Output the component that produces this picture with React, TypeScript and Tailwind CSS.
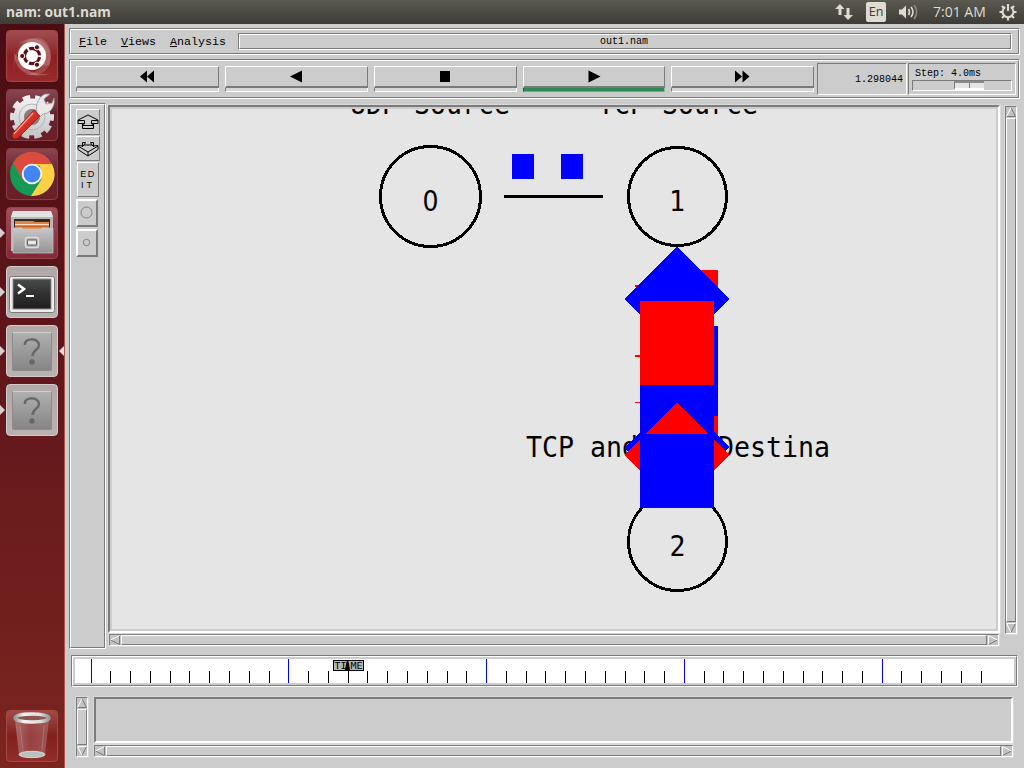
import React from "react";

const MONO = "font-['Liberation_Mono',monospace]";
const DARK = "#7b7b7b";

function Groove({ className = "", inner = "", children }: { className?: string; inner?: string; children?: React.ReactNode }) {
  return (
    <div className={`border border-t-[#7b7b7b] border-l-[#7b7b7b] border-r-white border-b-white ${className}`}>
      <div className={`h-full w-full border border-t-white border-l-white border-r-[#7b7b7b] border-b-[#7b7b7b] ${inner}`}>{children}</div>
    </div>
  );
}

function Tri({ dir }: { dir: "up" | "down" | "left" | "right" }) {
  const paths = {
    up: ["M5 0.5L0.5 9.5", "M5 0.5L9.5 9.5H0.5"],
    down: ["M0.5 0.5H9.5M0.5 0.5L5 9.5", "M9.5 0.5L5 9.5"],
    left: ["M9.5 0.5L0.5 5", "M0.5 5L9.5 9.5V0.5"],
    right: ["M0.5 9.5V0.5L9.5 5", "M9.5 5L0.5 9.5"],
  }[dir];
  return (
    <svg className="h-[10px] w-[10px] shrink-0 bg-[#c3c3c3]" viewBox="0 0 10 10" fill="none">
      <path d={paths[1]} stroke={DARK} />
      <path d={paths[0]} stroke="#fff" />
    </svg>
  );
}

function Scroll({ vertical, className = "" }: { vertical?: boolean; className?: string }) {
  return (
    <div className={`flex gap-px border border-t-[#7b7b7b] border-l-[#7b7b7b] border-r-white border-b-white bg-[#c3c3c3] outline outline-[#d9d9d9] ${vertical ? "flex-col" : ""} ${className}`}>
      <Tri dir={vertical ? "up" : "left"} />
      <div className="min-h-0 min-w-0 flex-1 border border-t-white border-l-white border-r-[#7b7b7b] border-b-[#7b7b7b] bg-[#cccccc]" />
      <Tri dir={vertical ? "down" : "right"} />
    </div>
  );
}

function Control({ children, active, className }: { children: React.ReactNode; active?: boolean; className: string }) {
  return (
    <div className={`flex h-[26px] flex-col ${className}`}>
      <div className="flex h-[22px] items-center justify-center border-t border-r border-b-2 border-l border-t-white border-r-[#7b7b7b] border-b-[#7b7b7b] border-l-white">
        <svg className="mr-px" width="16" height="13" viewBox="0 0 16 13">{children}</svg>
      </div>
      <div className={active ? "h-1 border-r border-b border-l border-r-[#7fc79c] border-b-[#5fb383] border-l-[#1b5a36] bg-[#2e8b57]" : "h-1 border-r border-b border-l border-r-white border-b-white border-l-[#7b7b7b] bg-[#d6d6d6]"} />
    </div>
  );
}

function Tile({ children, className, left, right }: { children: React.ReactNode; className: string; left?: boolean; right?: boolean }) {
  return (
    <div className="relative flex h-[52px] w-full justify-center">
      {left && <svg className="absolute top-[21px] left-0" width="5" height="10"><path d="M0 0L5 5L0 10Z" fill="#d8d0d0" /></svg>}
      <div className={`flex h-[52px] w-[52px] items-center justify-center overflow-hidden rounded-[4px] ${className}`}>{children}</div>
      {right && <svg className="absolute top-[21px] right-0" width="5" height="10"><path d="M5 0L0 5L5 10Z" fill="#e4dcdc" /></svg>}
    </div>
  );
}

function Ubuntu() {
  return (
    <svg className="shrink-0" width="52" height="52" viewBox="0 0 52 52">
      <path d="M8 42C6 25 16 6 33 8C43 10 48 24 43 35L37 36C42 24 36 12 24 13C14 14 8 26 8 42Z" fill="#fff" opacity=".16" />
      <path d="M12 14C25 3 45 10 45 28C44 42 32 48 18 44C32 44 40 36 40 26C38 12 25 10 12 14Z" fill="#fff" opacity=".16" />
      <path d="M8 23C8 42 26 50 46 43C32 46 16 42 12 27Z" fill="#fff" opacity=".22" />
      <circle cx="26" cy="26" r="14" fill="#fff" />
      <circle cx="26" cy="26" r="7.6" fill="none" stroke="#5b1118" strokeWidth="3.2" strokeDasharray="13.9 2" strokeDashoffset="-1" transform="rotate(0 26 26)" />
      <g fill="#5b1118" stroke="#fff" strokeWidth="1"><circle cx="16.2" cy="26" r="2.6" /><circle cx="31" cy="17.3" r="2.6" /><circle cx="31" cy="34.7" r="2.6" /></g>
    </svg>
  );
}

function Settings() {
  return (
    <svg className="shrink-0" width="52" height="52" viewBox="0 0 52 52">
      <defs>
        <linearGradient id="gear" gradientUnits="userSpaceOnUse" x1="0" y1="5" x2="0" y2="50"><stop stopColor="#f6f6f6" /><stop offset="1" stopColor="#c2c2c2" /></linearGradient>
        <linearGradient id="handle" x1="0" y1="0" x2="1" y2="1"><stop stopColor="#f0624f" /><stop offset=".6" stopColor="#cf2820" /><stop offset="1" stopColor="#8f1512" /></linearGradient>
      </defs>
      <circle cx="26" cy="28" r="13" fill="none" stroke="url(#gear)" strokeWidth="11" />
      <circle cx="26" cy="28" r="19.5" fill="none" stroke="url(#gear)" strokeWidth="5" strokeDasharray="7.3 4.95" strokeDashoffset="3.6" />
      <circle cx="26" cy="28" r="13" fill="none" stroke="#b5b5b5" strokeWidth="1" />
      <circle cx="26" cy="28" r="8" fill="#8d7b7e" />
      <path d="M31 23C29 17 32 8 39 5L44 5L38 10L40 15L46 14L48 9C50 18 43 25 37 25L33 29Z" fill="#e8e8e8" stroke="#969696" strokeWidth=".8" />
      <path d="M28 21L34 27L12 49C9 52 4 47 7 44Z" fill="url(#handle)" stroke="#8e1b16" strokeWidth=".8" />
      <path d="M27 24L8 45" stroke="#ff9786" strokeWidth="1.3" />
    </svg>
  );
}

function Chrome() {
  return (
    <svg width="46" height="46" viewBox="-23 -23 46 46">
      <circle r="22" fill="#149a54" />
      <path d="M-19.05 -11A22 22 0 0 1 19.9 -10H0L-9.5 5.5Z" fill="#dc4b3e" />
      <path d="M20 -10A22 22 0 0 1 -1 22L9.5 5.5L8 -8L0 -10Z" fill="#ffd044" />
      <circle r="10.3" fill="#f4f5f7" /><circle r="8.4" fill="#4285f4" />
    </svg>
  );
}

function Files() {
  return (
    <svg className="shrink-0" width="52" height="52" viewBox="0 0 52 52">
      <defs><linearGradient id="cab" x2="0" y2="1"><stop stopColor="#c8c8c8" /><stop offset="1" stopColor="#939393" /></linearGradient></defs>
      <path d="M7 4H45L47 10V44H5V10Z" fill="#b7b7b7" />
      <path d="M7 4H45L47 10H5Z" fill="#e3e3e3" />
      <rect x="8" y="12" width="36" height="12" fill="#2f2a28" />
      <path d="M9 14H27L29 15H43V24H9Z" fill="#e5833d" />
      <path d="M9 17.5H43" stroke="#ffe3c4" /><path d="M9 19.5H43" stroke="#d35f27" />
      <path d="M7 21H16L17 22H35L36 21H47V46H7Z" fill="url(#cab)" stroke="#c9c9c9" strokeWidth=".7" />
      <rect x="19.5" y="30.5" width="13" height="10" rx="2" fill="#aaa" stroke="#ddd" strokeWidth="1.5" />
      <rect x="21.5" y="33" width="9" height="5" rx="1" fill="#e8e8e8" stroke="#5d5d5d" />
    </svg>
  );
}

function Terminal() {
  return (
    <svg className="shrink-0" width="52" height="52" viewBox="0 0 52 52">
      <defs><linearGradient id="term" x2="0" y2="1"><stop stopColor="#4b4b4b" /><stop offset=".5" stopColor="#303030" /><stop offset="1" stopColor="#1f1f1f" /></linearGradient></defs>
      <rect x="3.5" y="10.5" width="45" height="36" rx="2" fill="#eee" stroke="#777" />
      <rect x="7" y="13" width="38" height="30" fill="url(#term)" stroke="#8b8b8b" />
      <path d="M12 18.5L18 23L12 27.5" fill="none" stroke="#fff" strokeWidth="2.6" /><path d="M20 30H28" stroke="#fff" strokeWidth="2" />
    </svg>
  );
}

function Unknown() {
  return (
    <div className="flex h-[39px] w-[40px] items-center justify-center rounded-[2px] border border-[#8b8b8b] border-t-[#cfcfcf] bg-linear-to-b from-[#b0b0b0] to-[#858585]">
      <svg width="20" height="30" viewBox="0 0 20 30">
        <path d="M3 9C1.5 2 17 1 17 9C17 14 10.5 14 10.5 20" fill="none" stroke="#666" strokeWidth="2.4" />
        <circle cx="10" cy="26" r="2.7" fill="#666" />
      </svg>
    </div>
  );
}

function Trash() {
  return (
    <svg className="shrink-0" width="52" height="52" viewBox="0 0 52 52">
      <defs>
        <linearGradient id="bin"><stop stopColor="#b88c8c" /><stop offset=".45" stopColor="#a35151" /><stop offset="1" stopColor="#a86f6f" /></linearGradient>
        <linearGradient id="rim"><stop stopColor="#999" /><stop offset=".25" stopColor="#f3f3f3" /><stop offset=".75" stopColor="#ddd" /><stop offset="1" stopColor="#999" /></linearGradient>
      </defs>
      <path d="M9 10L13 44C16 48 36 48 39 44L43 10Z" fill="url(#bin)" opacity=".65" />
      <ellipse cx="26" cy="44.5" rx="13" ry="3.2" fill="#b9c1bf" stroke="#e5e5e5" strokeWidth=".8" />
      <ellipse cx="26" cy="8" rx="17" ry="4" fill="#8f5553" stroke="url(#rim)" strokeWidth="3.4" />
      <path d="M14 16L17 41M38 16L36 41" stroke="#d2a9a9" strokeOpacity=".35" />
    </svg>
  );
}

function TopBar() {
  return (
    <header className="flex h-6 shrink-0 items-center justify-between bg-linear-to-b from-[#5b5950] to-[#3d3c37] pr-[7px] pl-[6px] font-['Open_Sans','Noto_Sans',sans-serif] text-[#dfdbd2]">
      <span className="text-[13.8px] leading-6 font-bold">nam: out1.nam</span>
      <div className="flex items-center">
        <svg width="18" height="16" viewBox="0 0 18 16" fill="#dfdbd2"><path d="M5 0L9.5 5H6.5V11H3.5V5H0Z" /><path d="M13 16L8.5 11H11.5V4H14.5V11H18Z" /></svg>
        <span className="ml-[13px] flex h-5 w-5 items-center justify-center rounded-[2px] bg-[#dfdbd2] text-[12.5px] text-[#3d3c37]">En</span>
        <svg className="ml-[13px]" width="20" height="16" viewBox="0 0 20 16" fill="none"><path d="M0 5.5H3L7 1.5V14.5L3 10.5H0Z" fill="#dfdbd2" /><path d="M9.5 5Q11.5 8 9.5 11" stroke="#dfdbd2" strokeWidth="1.6" /><path d="M12 3Q16 8 12 13" stroke="#dfdbd2" strokeWidth="1.6" /><path d="M15 1Q20.5 8 15 15" stroke="#8c8980" strokeWidth="1.6" /></svg>
        <span className="ml-[14px] w-[54px] text-[14px] leading-6 whitespace-nowrap">7:01 AM</span>
        <svg className="ml-[12px]" width="18" height="18" viewBox="-9 -9 18 18" fill="none" stroke="#dfdbd2"><path d="M-2.7 -4.9A5.4 5.4 0 1 0 2.7 -4.9" strokeWidth="2" /><path d="M0 -8V-1" strokeWidth="2" /><path d="M5.5 0H8.5M-5.5 0H-8.5M0 5.5V8.5M4 4L6 6M-4 4L-6 6M4 -4L6 -6M-4 -4L-6 -6" strokeWidth="2.2" /></svg>
      </div>
    </header>
  );
}

function Launcher() {
  const wine = "border border-[#8d3a44] bg-linear-to-b from-[#8a4650] via-[#66212c] to-[#6c1f29]";
  const gray = "border border-[#d2cccc] bg-linear-to-b from-[#b3a8a8] to-[#b9b2b0]";
  return (
    <aside className="flex w-[65px] shrink-0 flex-col justify-between border-r border-[#a5594f] bg-linear-to-b from-[#4a0d13] via-[#65191c] via-55% to-[#7c251f] pt-[6px] pb-[6px]">
      <div className="flex flex-col gap-[7px]">
        <Tile className="border border-[#a5464a] bg-linear-to-b from-[#a04d50] via-[#8c2024] to-[#982a2b]"><Ubuntu /></Tile>
        <Tile className={wine}><Settings /></Tile>
        <Tile className={wine}><Chrome /></Tile>
        <Tile left className="border border-[#99404d] bg-linear-to-b from-[#a14e5d] to-[#822838]"><Files /></Tile>
        <Tile left className={gray}><Terminal /></Tile>
        <Tile left right className={gray}><Unknown /></Tile>
        <Tile left className={gray}><Unknown /></Tile>
      </div>
      <Tile className="border border-[#a14b48] bg-linear-to-b from-[#a04a48] via-[#82201e] to-[#922d2b]"><Trash /></Tile>
    </aside>
  );
}

function Menu({ label, className = "" }: { label: string; className?: string }) {
  return <span className={className}><span className="underline decoration-1 underline-offset-1">{label[0]}</span>{label.slice(1)}</span>;
}

function Toolbar() {
  return (
    <Groove className="mt-1 h-10 w-[951px]" inner="flex pt-[5px] pl-[5px]">
      <Control className="w-[143px]"><path d="M8 .5V12.5L1 6.5ZM15 .5V12.5L8 6.5Z" /></Control>
      <Control className="ml-[6px] w-[143px]"><path d="M14 .5V12.5L2 6.5Z" /></Control>
      <Control className="ml-[6px] w-[143px]"><path d="M3 1H13V12H3Z" /></Control>
      <Control active className="ml-[6px] w-[142px]"><path d="M2.5 .5V12.5L14.5 6.5Z" /></Control>
      <Control className="ml-[6px] w-[143px]"><path d="M1 .5V12.5L8 6.5ZM8.5 .5V12.5L15.5 6.5Z" /></Control>
      <div className={`${MONO} -mt-[3px] ml-[3px] flex h-8 w-[90px] items-center justify-end border border-t-[#7b7b7b] border-r-white border-b-white border-l-[#7b7b7b] pr-[3px] text-[10px]`}>1.298044</div>
      <div className={`${MONO} -mt-[3px] ml-px h-8 w-[108px] border border-t-[#7b7b7b] border-r-white border-b-white border-l-[#7b7b7b] pl-[3px] text-[10px] leading-none`}>
        <div className="h-4 pt-[5px] pl-[3px] whitespace-nowrap">Step: 4.0ms</div>
        <div className="flex h-[11px] w-[100px] border border-t-[#7b7b7b] border-r-white border-b-white border-l-[#7b7b7b] pl-[41px]">
          <div className="flex h-[9px] w-[30px] border-t-2 border-b-2 border-l border-t-[#8a8a8a] border-b-white border-l-[#7b7b7b] bg-[#e5e5e5]"><div className="ml-[14px] w-px bg-[#7b7b7b]" /></div>
        </div>
      </div>
    </Groove>
  );
}

const raised = "flex items-center justify-center border border-t-white border-l-white border-r-[#7b7b7b] border-b-[#7b7b7b]";
const raised2 = "flex items-center border-2 border-t-white border-l-white border-r-[#7b7b7b] border-b-[#7b7b7b]";

function ToolColumn() {
  return (
    <Groove className="h-[546px] w-[37px]" inner="flex flex-col items-start pt-1 pl-[5px]">
      <div className={`${raised} h-[26px] w-6`}>
        <svg className="shrink-0" width="22" height="16" viewBox="0 0 22 16" fill="none" stroke="#000"><path d="M5.5 14.5V9.5H1V6L11 1L21 6V9.5H16.5V14.5ZM1 6.5H7.5V9.5H5.5M21 6.5H14.5V9.5H16.5M7.5 9.5L6 11.5H16L14.5 9.5" /></svg>
      </div>
      <div className={`${raised} mt-px h-[25px] w-6`}>
        <svg className="shrink-0" width="22" height="16" viewBox="0 0 22 16" fill="none" stroke="#000"><path d="M5.5 1.5V5L1 4.5V8.5L11 15L21 8.5V4.5L16.5 5V1.5H13.5L15 4H7L8.5 1.5ZM1 5L11 11L21 5M11 11V15M7 4L5 6M15 4L17 6" /></svg>
      </div>
      <div className={`${raised} mt-px ml-px h-[35px] w-[22px] flex-col font-['Liberation_Sans',sans-serif] text-[9px] leading-[11px]`}>
        <span className="tracking-[1.6px]">ED</span><span className="tracking-[3px]">IT</span>
      </div>
      <div className={`${raised2} mt-[2px] h-7 w-[22px] pb-[2px] pl-[2px]`}><svg width="13" height="13"><circle cx="6.5" cy="6.5" r="5.5" fill="none" stroke="#777" strokeWidth=".9" /></svg></div>
      <div className={`${raised2} mt-[2px] h-7 w-[22px] pb-px pl-[4px]`}><svg width="9" height="9"><circle cx="4.5" cy="4.5" r="3.2" fill="none" stroke="#777" strokeWidth=".9" /></svg></div>
    </Groove>
  );
}

function Network() {
  const label = { fontSize: 29, lengthAdjust: "spacingAndGlyphs" as const };
  return (
    <svg className="block h-[520px] w-[884px] bg-[#e5e5e5] font-['DejaVu_Sans_Mono',monospace]" viewBox="112 109 884 520">
      <text x="350" y="114" textLength="160" {...label}>UDP Source</text>
      <text x="598" y="114" textLength="160" {...label}>TCP Source</text>
      <text x="526" y="457" textLength="304" {...label}>TCP and UDP Destina</text>
      <g fill="none" stroke="#000" strokeWidth="3" shapeRendering="crispEdges">
        <circle cx="430.5" cy="196.5" r="50" />
        <circle cx="677.5" cy="196.5" r="49" />
        <circle cx="677.5" cy="541.5" r="49" />
        <path d="M504 196.5H603" />
      </g>
      <text x="422.5" y="211" fontSize="29" textLength="16" lengthAdjust="spacingAndGlyphs" fontFamily="DejaVu Sans">0</text>
      <text x="669" y="211" textLength="16" {...label}>1</text>
      <text x="669.5" y="556" textLength="16" {...label}>2</text>
      <g shapeRendering="crispEdges">
        <path fill="#00f" d="M512 154H534V179H512ZM561 154H583V179H561Z" />
        <path fill="red" d="M700 270H718V291H700ZM635 285H645V287H635ZM635 355H640V357H635ZM635 402H640V403H635Z" />
        <path fill="#00f" d="M677 247L729.5 299L714 314H640L624.5 299Z" />
        <path fill="#00f" d="M714 326H718V416H714ZM640 385H714V508H640Z" />
        <path fill="red" d="M640 301H714V385H640ZM714 416H718V440H714Z" />
        <path fill="#00f" d="M640 432L624 448L628 451L640 441ZM714 431L729 447L726 451L714 441Z" />
        <path fill="red" d="M640 440L624.5 455L640 470ZM714 440L729.5 455L714 470ZM677 403L708.5 434H645.5Z" />
      </g>
    </svg>
  );
}

function Timeline() {
  const ticks = Array.from({ length: 46 }, (_, n) => ({ x: Math.floor(91.02 + 19.778 * n) - 75, major: n % 10 === 0 }));
  return (
    <Groove className="mt-[6px] ml-[2px] h-8 w-[947px]" inner="p-[2px]">
      <svg className="block h-6 w-[939px] bg-white" viewBox="0 0 939 24">
        <g shapeRendering="crispEdges">
          {ticks.map((t) => <rect key={t.x} x={t.x} y={t.major ? 0 : 12} width="1" height={t.major ? 24 : 12} fill={t.major ? "#0000ff" : "#000"} />)}
          <rect x="258.5" y="1.5" width="30" height="10" fill="#b5b5b5" stroke="#000" />
        </g>
        <text x="259.5" y="9.5" fontSize="9" textLength="12" lengthAdjust="spacingAndGlyphs" fontFamily="DejaVu Sans Mono">TI</text>
        <text x="275.5" y="9.5" fontSize="9" textLength="12" lengthAdjust="spacingAndGlyphs" fontFamily="DejaVu Sans Mono">ME</text>
        <path d="M272 1H273L274 5L275 11H270L271 5Z" />
      </svg>
    </Groove>
  );
}

export default function App() {
  return (
    <div className="flex h-[768px] w-[1024px] flex-col overflow-hidden bg-[#cccccc] text-black">
      <TopBar />
      <div className="flex min-h-0 flex-1">
        <Launcher />
        <main className="flex min-w-0 flex-1 flex-col pt-1 pl-1">
          <Groove className="h-[27px] w-[951px] shrink-0" inner="flex items-start pt-[3px] pl-2">
            <nav className={`${MONO} flex w-[159px] pt-[2px] text-[11.67px] leading-[14px]`}>
              <Menu label="File" /><Menu label="Views" className="ml-[14px]" /><Menu label="Analysis" className="ml-[14px]" />
            </nav>
            <Groove className="h-[17px] w-[774px]" inner={`${MONO} flex items-center justify-center text-[10px] leading-none pr-[2px]`}>out1.nam</Groove>
          </Groove>
          <Toolbar />
          <div className="mt-1 flex h-[546px]">
            <ToolColumn />
            <div className="ml-[2px] flex flex-col pt-[2px]">
              <div className="h-[528px] w-[892px] border-2 border-t-[#7b7b7b] border-r-white border-b-white border-l-[#7b7b7b] p-[2px] outline outline-[#d9d9d9]"><Network /></div>
              <Scroll className="mt-px ml-px h-3 w-[890px]" />
            </div>
            <Scroll vertical className="mt-[3px] ml-[5px] h-[528px] w-3" />
          </div>
          <Timeline />
          <div className="mt-[10px] ml-[7px] flex h-[60px] gap-[6px]">
            <Scroll vertical className="h-[60px] w-3" />
            <div className="flex flex-col">
              <div className="h-[46px] w-[919px] border-2 border-t-[#7b7b7b] border-r-white border-b-white border-l-[#7b7b7b] outline outline-[#d9d9d9]" />
              <Scroll className="mt-[2px] h-3 w-[919px]" />
            </div>
          </div>
        </main>
      </div>
    </div>
  );
}
